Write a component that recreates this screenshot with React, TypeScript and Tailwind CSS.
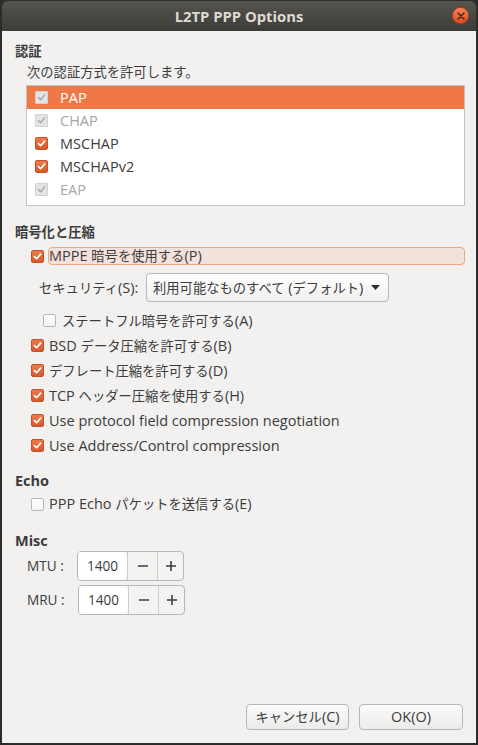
import React from "react";

type Kind = "on" | "off" | "dis" | "sel";

const CJK = /([\u3000-\u30ff\u4e00-\u9fff\uff00-\uffef]+)/;

function T({ s }: { s: string }) {
  const parts = s.split(CJK);
  return (
    <span>
      {parts.map((p, i) =>
        p === "" ? null : CJK.test(p) ? (
          <span key={i} className="text-[13.3px]">{p}</span>
        ) : (
          <span key={i}>{p}</span>
        )
      )}
    </span>
  );
}

function Box({ kind }: { kind: Kind }) {
  if (kind === "on")
    return (
      <span className="w-[13px] h-[13px] shrink-0 rounded-[2px] bg-linear-to-b from-[#ef7a4a] to-[#d9582a] border border-[#c2512a] flex items-center justify-center">
        <svg width="9" height="9" viewBox="0 0 9 9">
          <path d="M1.4 4.6 L3.6 6.7 L7.6 2.1" stroke="#ffffff" strokeWidth="1.7" fill="none" strokeLinecap="round" strokeLinejoin="round" />
        </svg>
      </span>
    );
  if (kind === "off")
    return <span className="w-[13px] h-[13px] shrink-0 rounded-[2px] bg-linear-to-b from-[#ffffff] to-[#f4f4f4] border border-[#b8b8b8]" />;
  return (
    <span className="w-[13px] h-[13px] shrink-0 rounded-[1px] bg-[#e4e4e4] border border-[#d2d2d2] flex items-center justify-center">
      <svg width="9" height="9" viewBox="0 0 9 9">
        <path d="M1.4 4.6 L3.6 6.7 L7.6 2.1" stroke="#a9a9a9" strokeWidth="1.5" fill="none" strokeLinecap="round" strokeLinejoin="round" />
      </svg>
    </span>
  );
}

function ListRow({ label, kind, selected }: { label: string; kind: Kind; selected?: boolean }) {
  const color = selected ? "text-white" : kind === "dis" ? "text-[#a6a6a6]" : "text-[#3c3c3c]";
  return (
    <div className={`h-[23px] flex items-center pl-[8px] gap-[12px] ${selected ? "bg-[#f07746]" : ""}`}>
      <Box kind={kind} />
      <span className={color}>{label}</span>
    </div>
  );
}

function CheckRow({ label, on = true }: { label: string; on?: boolean }) {
  return (
    <div className="h-[25px] flex items-center ml-[16px] gap-[5px]">
      <Box kind={on ? "on" : "off"} />
      <T s={label} />
    </div>
  );
}

function Spin({ label, shift }: { label: string; shift?: boolean }) {
  return (
    <div className="flex items-center ml-[12px] h-[30px]">
      <span className={`text-[13.6px] ${shift ? "w-[51px]" : "w-[50px]"}`}>{label}</span>
      <div className="w-[107px] h-[30px] flex rounded-[4px] border border-[#b6b6b4] overflow-hidden bg-[#f4f3f2]">
        <div className="w-[49px] bg-white rounded-r-[6px] flex items-center justify-center text-[13.6px] text-[#3c3c3c]">1400</div>
        <div className="w-[30px] border-l border-[#cfcdca] flex items-center justify-center">
          <svg width="12" height="12" viewBox="0 0 12 12"><path d="M1 6 H11" stroke="#3c3c3c" strokeWidth="1.6" /></svg>
        </div>
        <div className="flex-1 border-l border-[#cfcdca] flex items-center justify-center">
          <svg width="12" height="12" viewBox="0 0 12 12"><path d="M1 6 H11 M6 1 V11" stroke="#3c3c3c" strokeWidth="1.6" /></svg>
        </div>
      </div>
    </div>
  );
}

export default function App() {
  return (
    <div className="w-[478px] h-[745px] bg-[#2c2c2b] overflow-hidden font-['Open_Sans','Noto_Sans_CJK_JP',sans-serif] text-[14.5px] text-[#3c3c3c]">
      <div className="ml-[2px] mt-[1px] w-[474px] h-[742px] flex flex-col rounded-t-[6px] overflow-hidden">
        <div className="relative h-[30px] shrink-0 bg-linear-to-b from-[#56544e] to-[#3d3c38] flex items-center justify-center">
          <span className="font-bold text-[14.8px] text-[#dfdbd2]">L2TP PPP Options</span>
          <div className="absolute right-[7px] top-[6px] w-[17px] h-[17px] rounded-full bg-linear-to-b from-[#f4835a] to-[#df4b1c] border border-[#b8441f] flex items-center justify-center">
            <svg width="8" height="8" viewBox="0 0 8 8">
              <path d="M1 1 L7 7 M7 1 L1 7" stroke="#3c2a22" strokeWidth="1.5" strokeLinecap="round" />
            </svg>
          </div>
        </div>
        <div className="flex-1 bg-[#f2f1f0] flex flex-col pl-[13px] pt-[10px] pb-[13px]">
          <div className="h-[20px] flex items-center font-bold"><T s="認証" /></div>
          <div className="h-[20px] mt-[1px] flex items-center ml-[12px]"><T s="次の認証方式を許可します。" /></div>
          <div className="mt-[3px] ml-[11px] w-[439px] border border-[#c2c2c0] bg-white pb-[4px]">
            <ListRow label="PAP" kind="dis" selected />
            <ListRow label="CHAP" kind="dis" />
            <ListRow label="MSCHAP" kind="on" />
            <ListRow label="MSCHAPv2" kind="on" />
            <ListRow label="EAP" kind="dis" />
          </div>
          <div className="h-[20px] mt-[16px] flex items-center font-bold"><T s="暗号化と圧縮" /></div>
          <div className="h-[18px] mt-[5px] flex items-center ml-[16px] gap-[4px]">
            <Box kind="on" />
            <span className="w-[417px] h-[18px] flex items-center rounded-[4px] border border-[#f2a385] bg-[#f3e2dc]">
              <T s="MPPE 暗号を使用する(P)" />
            </span>
          </div>
          <div className="h-[29px] mt-[8px] flex items-center ml-[24px]">
            <span className="w-[107px]"><T s="セキュリティ(S):" /></span>
            <div className="w-[243px] h-[29px] rounded-[4px] border border-[#b9b8b6] bg-linear-to-b from-[#ffffff] to-[#f1f0ef] flex items-center justify-between pl-[6px] pr-[8px]">
              <T s="利用可能なものすべて (デフォルト)" />
              <svg width="9" height="5" viewBox="0 0 9 5"><path d="M0 0 H9 L4.5 5 Z" fill="#2e2e2e" /></svg>
            </div>
          </div>
          <div className="h-[25px] mt-[6px] flex items-center ml-[28px] gap-[6px]">
            <Box kind="off" />
            <T s="ステートフル暗号を許可する(A)" />
          </div>
          <CheckRow label="BSD データ圧縮を許可する(B)" />
          <CheckRow label="デフレート圧縮を許可する(D)" />
          <CheckRow label="TCP ヘッダー圧縮を使用する(H)" />
          <CheckRow label="Use protocol field compression negotiation" />
          <CheckRow label="Use Address/Control compression" />
          <div className="h-[20px] mt-[13px] flex items-center font-bold">Echo</div>
          <div className="h-[20px] mt-[3px] flex items-center ml-[16px] gap-[5px]">
            <Box kind="off" />
            <T s="PPP Echo パケットを送信する(E)" />
          </div>
          <div className="h-[20px] mt-[17px] flex items-center font-bold">Misc</div>
          <Spin label="MTU :" />
          <div className="mt-[4px]">
            <Spin label="MRU :" shift />
          </div>
          <div className="flex-1" />
          <div className="flex justify-end gap-[10px] pr-[13px]">
            <button className="w-[103px] h-[26px] rounded-[4px] border border-[#b8b7b5] bg-linear-to-b from-[#fbfbfa] to-[#ecebe9] text-[#3c3c3c]"><T s="キャンセル(C)" /></button>
            <button className="w-[104px] h-[26px] rounded-[4px] border border-[#b8b7b5] bg-linear-to-b from-[#fbfbfa] to-[#ecebe9] text-[#3c3c3c]"><T s="OK(O)" /></button>
          </div>
        </div>
      </div>
    </div>
  );
}
